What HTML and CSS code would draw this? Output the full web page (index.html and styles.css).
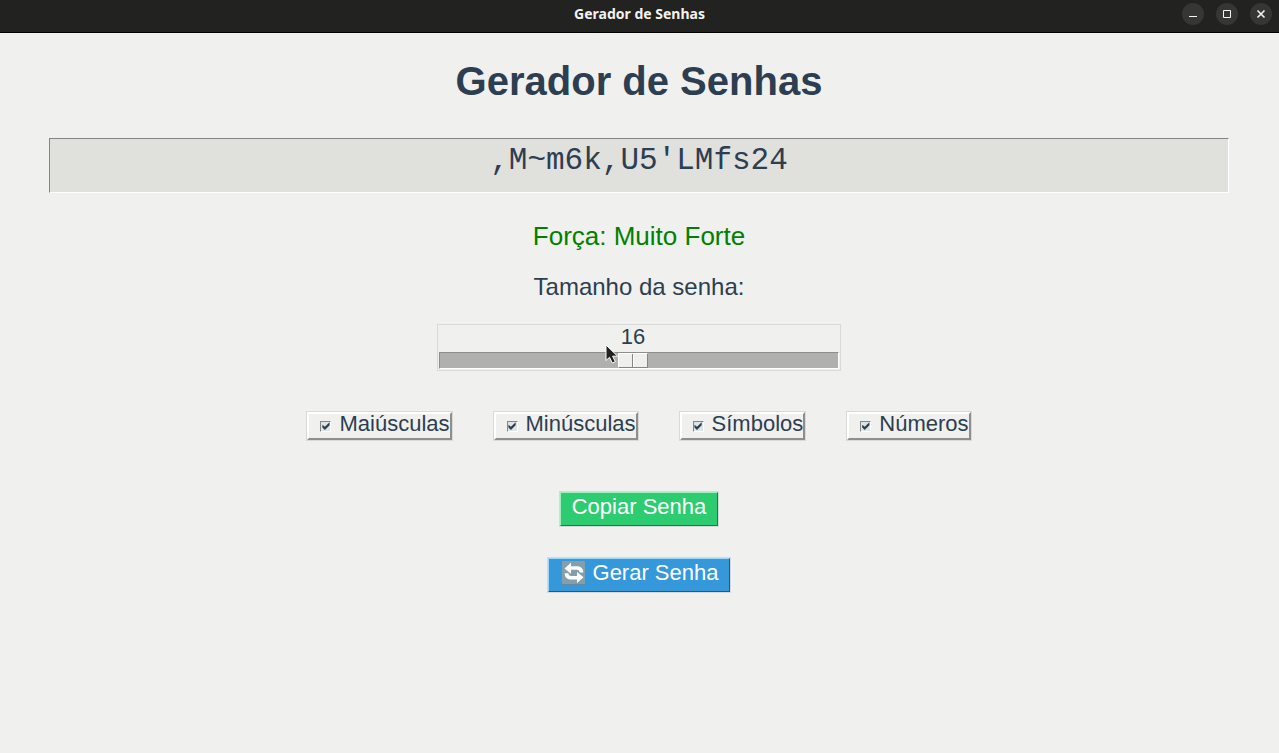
FILE: index.html
```html
<!DOCTYPE html>
<html lang="pt-BR">
<head>
<meta charset="utf-8">
<title>Gerador de Senhas</title>
<link rel="stylesheet" href="styles.css">
</head>
<body>
<header class="titlebar">
  <span class="titlebar-name">Gerador de Senhas</span>
  <div class="window-controls">
    <button type="button" aria-label="Minimizar"><svg viewBox="0 0 22 22"><path d="M7 13.500h8"/></svg></button>
    <button type="button" aria-label="Maximizar"><svg viewBox="0 0 22 22"><path d="M7.500 7.500h7v7h-7z"/></svg></button>
    <button type="button" aria-label="Fechar"><svg viewBox="0 0 22 22"><path d="M7.500 7.500l7 7M14.500 7.500l-7 7" stroke-width="1.600"/></svg></button>
  </div>
</header>
<main class="app">
  <h1 class="heading">Gerador de Senhas</h1>
  <input class="password" type="text" aria-label="Senha gerada" value=",M~m6k,U5'LMfs24" readonly>
  <p class="strength">Força: Muito Forte</p>
  <label class="length-label" for="length">Tamanho da senha:</label>
  <div class="scale">
    <output class="scale-value" for="length">16</output>
    <input class="scale-range" id="length" type="range" min="1" max="32" value="16">
    <svg class="cursor" viewBox="0 0 14 20" aria-hidden="true"><path d="M1 1v15.500l3.500-3.200 2.800 5.700 3-1.400-2.700-5.400h5z"/></svg>
  </div>
  <div class="options">
    <label class="option"><input type="checkbox" checked><span>Maiúsculas</span></label>
    <label class="option"><input type="checkbox" checked><span>Minúsculas</span></label>
    <label class="option"><input type="checkbox" checked><span>Símbolos</span></label>
    <label class="option"><input type="checkbox" checked><span>Números</span></label>
  </div>
  <button class="action copy" type="button">Copiar Senha</button>
  <button class="action generate" type="button">
    <svg class="refresh" viewBox="0 0 24 24" aria-hidden="true">
      <rect width="24" height="24" rx="1" fill="#648b9f"/>
      <rect width="23" height="23" rx="1" fill="#839fae"/>
      <path d="M2.500 7.500L9 1.800v3.400h6c4.200 0 6.300 2.500 6.300 6.300h-3.800c0-1.800-.8-2.700-2.700-2.700H9v4z" fill="#fff"/>
      <path d="M21.500 16.300L15 22v-3.400H9c-4.200 0-6.300-2.500-6.300-6.300h3.800c0 1.800.8 2.700 2.700 2.700H15v-4z" fill="#fff"/>
    </svg>
    Gerar Senha
  </button>
</main>
</body>
</html>
```
FILE: styles.css
```css
* {
  box-sizing: border-box;
}

body {
  margin: 0;
  min-height: 100vh;
  background: #f0f0ee;
  color: #2c3e50;
  font-family: "Liberation Sans", Arial, sans-serif;
}

.titlebar {
  display: grid;
  grid-template-columns: 1fr auto 1fr;
  align-items: center;
  height: 33px;
  padding: 0 7px 4px;
  border-bottom: 1px solid #000;
  background: #222220;
  color: #f2f2f0;
}

.titlebar-name {
  grid-column: 2;
  font: bold 14px/20px "Noto Sans", sans-serif;
}

.window-controls {
  display: flex;
  justify-content: flex-end;
  gap: 12px;
}

.window-controls button {
  width: 22px;
  height: 22px;
  padding: 0;
  border: 0;
  border-radius: 50%;
  background: #363635;
}

.window-controls svg {
  display: block;
  fill: none;
  stroke: #f5f5f3;
  stroke-width: 1;
}

.app {
  display: flex;
  flex-direction: column;
  align-items: center;
  padding: 24px 50px 24px 49px;
}

.heading {
  margin: 0;
  font-size: 40px;
  line-height: 48px;
}

.password {
  align-self: stretch;
  height: 55px;
  margin-top: 33px;
  padding: 0 0 10px;
  border: 1px solid;
  border-color: #858585 #fff #fff #858585;
  background: #e0e0dc;
  color: #2c3e50;
  font: 31px "Liberation Mono", monospace;
  text-align: center;
  outline: 0;
}

.strength {
  margin: 27px 0 0;
  color: #008000;
  font-size: 26px;
  line-height: 32px;
}

.length-label {
  margin-top: 21px;
  font-size: 24px;
  line-height: 28px;
}

.scale {
  position: relative;
  display: flex;
  flex-direction: column;
  align-items: center;
  width: 404px;
  margin-top: 23px;
  padding: 0 1px 1px;
  border: 1px solid #d9d9d7;
}

.scale-value {
  padding-right: 12px;
  font-size: 22px;
  line-height: 24px;
}

.scale-range {
  appearance: none;
  width: 100%;
  height: 17px;
  margin: 3px 0 0;
  border: 1px solid;
  border-color: #8e8e8d #fff #fff #8e8e8d;
  background: #b0b0af;
}

.scale-range::-webkit-slider-thumb {
  appearance: none;
  width: 30px;
  height: 15px;
  border: 1px solid;
  border-color: #fff #858585 #858585 #fff;
  background: linear-gradient(90deg, transparent 13px, #858585 13px 14px, #fff 14px 15px, transparent 15px) #efefed;
}

.cursor {
  position: absolute;
  top: 19px;
  left: 167px;
  width: 14px;
  height: 20px;
  fill: #222;
  stroke: #fff;
  stroke-width: 1;
}

.options {
  display: flex;
  flex-wrap: wrap;
  gap: 42px;
  margin-top: 41px;
}

.option {
  display: flex;
  align-items: center;
  gap: 8px;
  height: 28px;
  padding-left: 11px;
  border: 2px solid;
  border-color: #fff #8e8e8d #8e8e8d #fff;
  outline: 1px solid #d9d9d7;
  font-size: 22px;
  line-height: 24px;
}

.option span {
  padding-bottom: 4px;
}

.option input {
  appearance: none;
  width: 11px;
  height: 11px;
  margin: 0;
  border: 1px solid;
  border-color: #858585 #fff #fff #858585;
  background: #dde4e6;
}

.option input:checked::before {
  content: "";
  display: block;
  width: 9px;
  height: 9px;
  background: #2c3e50;
  clip-path: polygon(10% 35%, 38% 58%, 90% 8%, 90% 42%, 38% 94%, 10% 68%);
}

.action {
  display: flex;
  align-items: center;
  height: 34px;
  padding: 0 11px 4px;
  border: 1px solid;
  outline: 1px solid #d5d9d7;
  color: #fff;
  font: 22px/26px "Liberation Sans", Arial, sans-serif;
}

.copy {
  margin-top: 52px;
  border-color: #9df0bd #1b7d43 #1b7d43 #9df0bd;
  background: #2ecc71;
}

.generate {
  gap: 7px;
  margin-top: 32px;
  padding-left: 13px;
  border-color: #9fd5f7 #1d5c86 #1d5c86 #9fd5f7;
  background: #3498db;
}

.refresh {
  width: 24px;
  height: 24px;
}
```
